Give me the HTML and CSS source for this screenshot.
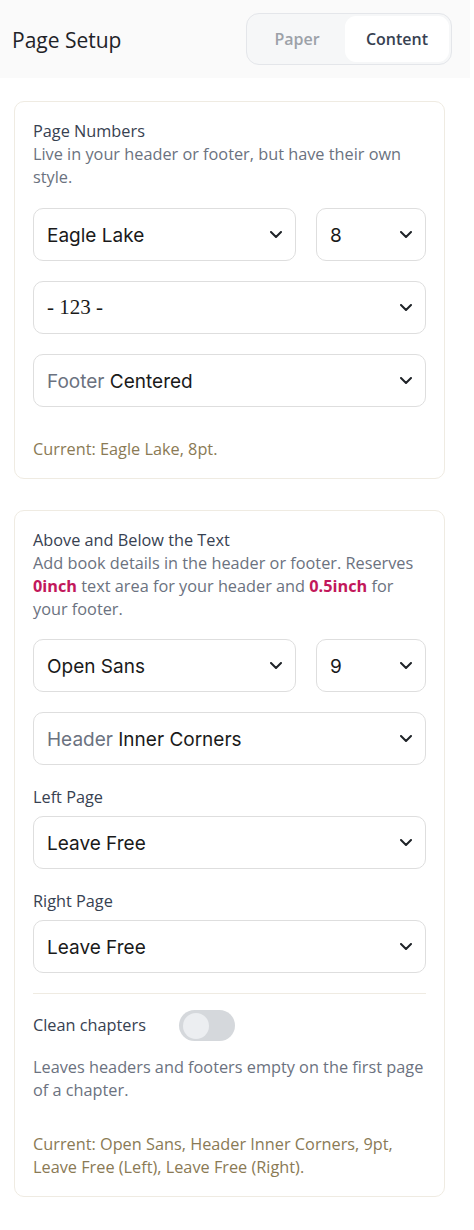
FILE: index.html
```html
<!DOCTYPE html>
<html lang="en">
<head>
<meta charset="utf-8">
<title>Page Setup</title>
<link rel="stylesheet" href="styles.css">
</head>
<body>
<header class="topbar">
  <h1 class="title">Page Setup</h1>
  <div class="seg">
    <span class="seg-tab seg-paper">Paper</span>
    <span class="seg-tab seg-content active">Content</span>
  </div>
</header>

<main class="main">
  <section class="card card-1">
    <h2 class="card-title">Page Numbers</h2>
    <p class="desc">Live in your header or footer, but have their own style.</p>

    <div class="row">
      <div class="select"><span class="val">Eagle Lake</span><svg class="chev" viewBox="0 0 12 7"><path d="M1 1l5 5 5-5"/></svg></div>
      <div class="select"><span class="val">8</span><svg class="chev" viewBox="0 0 12 7"><path d="M1 1l5 5 5-5"/></svg></div>
    </div>
    <div class="select"><span class="val val-serif">- 123 -</span><svg class="chev" viewBox="0 0 12 7"><path d="M1 1l5 5 5-5"/></svg></div>
    <div class="select"><span class="val"><span class="muted">Footer</span> Centered</span><svg class="chev" viewBox="0 0 12 7"><path d="M1 1l5 5 5-5"/></svg></div>

    <p class="current">Current: Eagle Lake, 8pt.</p>
  </section>

  <section class="card card-2">
    <h2 class="card-title">Above and Below the Text</h2>
    <p class="desc">Add book details in the header or footer. Reserves <b class="hl">0inch</b> text area for your header and <b class="hl">0.5inch</b> for your footer.</p>

    <div class="row row-tight">
      <div class="select"><span class="val">Open Sans</span><svg class="chev" viewBox="0 0 12 7"><path d="M1 1l5 5 5-5"/></svg></div>
      <div class="select"><span class="val">9</span><svg class="chev" viewBox="0 0 12 7"><path d="M1 1l5 5 5-5"/></svg></div>
    </div>
    <div class="select"><span class="val"><span class="muted">Header</span> Inner Corners</span><svg class="chev" viewBox="0 0 12 7"><path d="M1 1l5 5 5-5"/></svg></div>

    <div class="field">
      <label class="label">Left Page</label>
      <div class="select"><span class="val">Leave Free</span><svg class="chev" viewBox="0 0 12 7"><path d="M1 1l5 5 5-5"/></svg></div>
    </div>
    <div class="field">
      <label class="label">Right Page</label>
      <div class="select"><span class="val">Leave Free</span><svg class="chev" viewBox="0 0 12 7"><path d="M1 1l5 5 5-5"/></svg></div>
    </div>

    <hr class="divider">

    <div class="toggle-row">
      <span class="label">Clean chapters</span>
      <span class="toggle"><span class="knob"></span></span>
    </div>
    <p class="desc desc-toggle">Leaves headers and footers empty on the first page of a chapter.</p>

    <p class="current">Current: Open Sans, Header Inner Corners, 9pt, Leave Free (Left), Leave Free (Right).</p>
  </section>
</main>
</body>
</html>
```

FILE: styles.css
```css
* { box-sizing: border-box; }

html, body {
  margin: 0;
  padding: 0;
  background: #ffffff;
}

body {
  font-family: "Open Sans", "Noto Sans", sans-serif;
  color: #374151;
  width: 474px;
}

.topbar {
  height: 78px;
  margin-right: 4px;
  background: #fafafa;
  display: flex;
  align-items: center;
  justify-content: space-between;
  padding: 0 18px 0 12px;
}

.title {
  margin: 0;
  font-size: 21px;
  font-weight: 400;
  color: #1f2328;
  position: relative;
  top: 1px;
}

.seg {
  display: flex;
  height: 52px;
  padding: 2px;
  border: 1.5px solid #e4e6ea;
  border-radius: 13px;
  background: #f6f7f8;
}

.seg-tab {
  display: flex;
  align-items: center;
  justify-content: center;
  font-size: 16px;
  font-weight: 600;
  border-radius: 11px;
}

.seg-paper {
  width: 96px;
  color: #9ca1a8;
}

.seg-content {
  width: 104px;
  color: #374151;
}

.seg-tab.active {
  background: #ffffff;
}

.main {
  padding: 23px 29px 0 14px;
  display: flex;
  flex-direction: column;
  gap: 31px;
}

.card {
  border: 1.5px solid #efebe2;
  border-radius: 10px;
  padding: 18px 18px 17px;
  display: flex;
  flex-direction: column;
  background: #fff;
}

.card-title {
  margin: 0;
  font-size: 16.3px;
  line-height: 23px;
  font-weight: 400;
  color: #374151;
}

.desc {
  margin: 0;
  font-size: 16.3px;
  line-height: 23px;
  color: #6b7280;
}

.hl {
  color: #c2185b;
  font-weight: 700;
}

.row {
  display: grid;
  grid-template-columns: 1fr 110px;
  gap: 20px;
  margin-top: 19px;
}

.row-tight {
  margin-top: 18px;
}

.card > .select {
  margin-top: 20px;
}

.select {
  height: 53px;
  border: 1.5px solid #dedede;
  border-radius: 10px;
  display: flex;
  align-items: center;
  justify-content: space-between;
  padding: 0 13px 0 13px;
  background: #fff;
}

.val {
  font-family: "Inter", "Liberation Sans", sans-serif;
  font-size: 19px;
  color: #1a1a1a;
  position: relative;
  top: 1px;
}

.val-serif {
  font-family: "Liberation Serif", "DejaVu Serif", serif;
  font-size: 21px;
  font-variant-numeric: oldstyle-nums;
  top: 0;
}

.muted {
  color: #6b7280;
}

.chev {
  width: 12px;
  height: 7px;
  fill: none;
  stroke: #1f2328;
  stroke-width: 2;
  stroke-linecap: round;
  stroke-linejoin: round;
  flex: none;
}

.field {
  display: flex;
  flex-direction: column;
  gap: 7px;
  margin-top: 21px;
}

.label {
  font-size: 16.3px;
  line-height: 23px;
  color: #374151;
}

.current {
  margin: 31px 0 0;
  font-size: 16.3px;
  line-height: 23px;
  color: #8a7a55;
}

.divider {
  border: 0;
  border-top: 1.5px solid #efebe2;
  margin: 20px 0 0;
}

.toggle-row {
  display: flex;
  align-items: center;
  gap: 33px;
  margin-top: 16px;
}

.toggle {
  width: 56px;
  height: 31px;
  border-radius: 16px;
  background: #d5d8dc;
  padding: 2.5px 4px;
  display: flex;
  align-items: center;
}

.knob {
  width: 26px;
  height: 26px;
  border-radius: 50%;
  background: #eceef1;
}

.desc-toggle {
  margin-top: 15px;
}
```
